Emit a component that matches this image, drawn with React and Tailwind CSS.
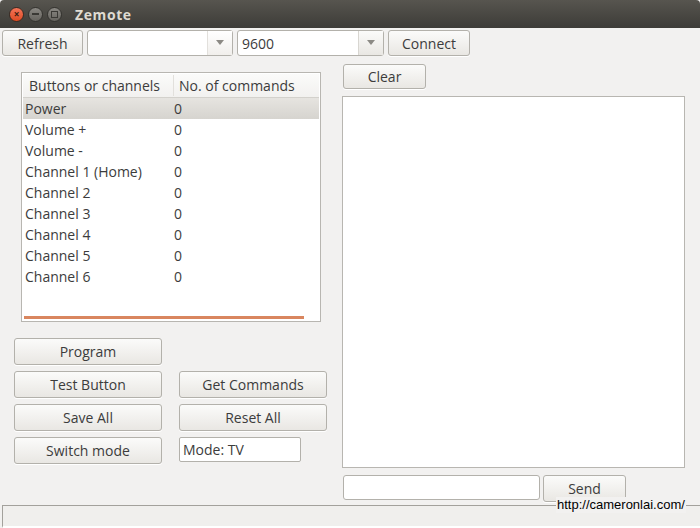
import React from 'react';

const rows = [
  'Power',
  'Volume +',
  'Volume -',
  'Channel 1 (Home)',
  'Channel 2',
  'Channel 3',
  'Channel 4',
  'Channel 5',
  'Channel 6',
];

const btn =
  'flex items-center justify-center rounded-[3px] border border-[#b3b1ab] bg-gradient-to-b from-[#fbfbfa] to-[#e9e7e3] text-[#3c3c3c] text-[14px] shadow-[0_1px_0_#ffffff]';

const Arrow = () => (
  <svg width="10" height="6" viewBox="0 0 10 6">
    <path d="M1 0 L9 0 L5 5 Z" fill="#8c8a85" />
  </svg>
);

const App = () => {
  return (
    <div
      className="relative w-[700px] h-[528px] bg-[#f2f1f0] overflow-hidden flex flex-col"
      style={{ fontFamily: '"Open Sans", "Noto Sans", sans-serif' }}
    >
      {/* Title bar */}
      <div className="h-[28px] bg-gradient-to-b from-[#57554f] to-[#3d3c38] flex items-center pl-[9px] shrink-0 rounded-t-[4px]">
        <div className="w-[15px] h-[15px] rounded-full bg-gradient-to-b from-[#f37458] to-[#df4a20] border border-[#3a2a22] flex items-center justify-center text-[#3b1d10] text-[10px] leading-none font-bold">
          ×
        </div>
        <div className="ml-[4px] w-[15px] h-[15px] rounded-full bg-gradient-to-b from-[#8a8883] to-[#65635e] border border-[#34332f] flex items-center justify-center">
          <div className="w-[7px] h-[2px] bg-[#3a3935]" />
        </div>
        <div className="ml-[4px] w-[15px] h-[15px] rounded-full bg-gradient-to-b from-[#8a8883] to-[#65635e] border border-[#34332f] flex items-center justify-center">
          <div className="w-[7px] h-[7px] border-[1.5px] border-[#3a3935]" />
        </div>
        <span className="ml-[13px] text-[14px] font-bold text-[#dfdbd2] tracking-[0.6px]">Zemote</span>
      </div>

      {/* Toolbar */}
      <div className="flex items-center h-[26px] mt-[2px] pl-[2px] shrink-0">
        <button className={`${btn} w-[81px] h-[26px]`}>Refresh</button>
        <div className="ml-[4px] w-[146px] h-[26px] flex rounded-[3px] border border-[#b3b1ab] bg-white">
          <div className="flex-1" />
          <div className="w-[25px] flex items-center justify-center border-l border-[#e2e0dc] bg-gradient-to-b from-[#ffffff] to-[#f1efec]">
            <Arrow />
          </div>
        </div>
        <div className="ml-[4px] w-[147px] h-[26px] flex rounded-[3px] border border-[#b3b1ab] bg-white">
          <div className="flex-1 flex items-center pl-[4px] text-[14px] text-[#3c3c3c]">9600</div>
          <div className="w-[25px] flex items-center justify-center border-l border-[#d8d6d1] bg-gradient-to-b from-[#fbfbfa] to-[#e9e7e3]">
            <Arrow />
          </div>
        </div>
        <button className={`${btn} ml-[4px] w-[82px] h-[26px]`}>Connect</button>
      </div>

      {/* Main */}
      <div className="flex flex-1">
        {/* Left */}
        <div className="w-[342px] shrink-0 flex flex-col">
          <div className="ml-[21px] mt-[16px] w-[300px] h-[250px] border border-[#b8b6b1] bg-white flex flex-col p-[1px]">
            <div className="flex h-[24px] items-center text-[14px] text-[#3c3c3c] bg-gradient-to-b from-[#fbfbfa] to-[#f2f1ef] border-b border-[#d3d1cc]">
              <div className="w-[151px] pl-[6px] border-r border-[#e2e0dc]">Buttons or channels</div>
              <div className="pl-[5px]">No. of commands</div>
            </div>
            <div className="flex flex-col">
              {rows.map((name, i) => (
                <div
                  key={name}
                  className={`flex h-[21px] items-center text-[14px] text-[#3c3c3c] ${
                    i === 0 ? 'bg-gradient-to-b from-[#e6e4e0] to-[#d6d4cf]' : ''
                  }`}
                >
                  <div className="w-[151px] pl-[2px]">{name}</div>
                  <div>0</div>
                </div>
              ))}
            </div>
            <div className="flex-1" />
            <div className="ml-[1px] mb-[1px] w-[280px] h-[3px] bg-[#d9865f]" />
          </div>

          <div className="ml-[14px] mt-[16px] grid grid-cols-[148px_148px] gap-x-[17px] gap-y-[6px]">
            <button className={`${btn} h-[27px]`}>Program</button>
            <div />
            <button className={`${btn} h-[27px]`}>Test Button</button>
            <button className={`${btn} h-[27px]`}>Get Commands</button>
            <button className={`${btn} h-[27px]`}>Save All</button>
            <button className={`${btn} h-[27px]`}>Reset All</button>
            <button className={`${btn} h-[27px]`}>Switch mode</button>
            <div className="w-[122px] h-[25px] border border-[#b3b1ab] rounded-[2px] bg-white flex items-center pl-[3px] text-[14px] text-[#3c3c3c]">
              Mode: TV
            </div>
          </div>
        </div>

        {/* Right */}
        <div className="flex flex-col">
          <button className={`${btn} ml-[1px] mt-[8px] w-[83px] h-[25px]`}>Clear</button>
          <div className="mt-[7px] w-[343px] h-[372px] border border-[#b8b6b1] bg-white" />
          <div className="flex mt-[7px] items-start">
            <div className="ml-[1px] w-[197px] h-[25px] border border-[#b3b1ab] rounded-[3px] bg-white" />
            <button className={`${btn} ml-[3px] w-[83px] h-[27px]`}>Send</button>
          </div>
        </div>
      </div>

      {/* Status bar */}
      <div className="h-[23px] ml-[2px] border-t border-l border-[#a3a19c] bg-[#f0efed] border-b-2 border-b-white shrink-0" />

      <div
        className="absolute left-[556px] top-[497px] text-[13px] leading-[16px] text-black bg-[#f2f1f0] px-[1px]"
        style={{ fontFamily: '"Liberation Sans", Arial, sans-serif' }}
      >
        http://cameronlai.com/
      </div>
    </div>
  );
};

export default App;
